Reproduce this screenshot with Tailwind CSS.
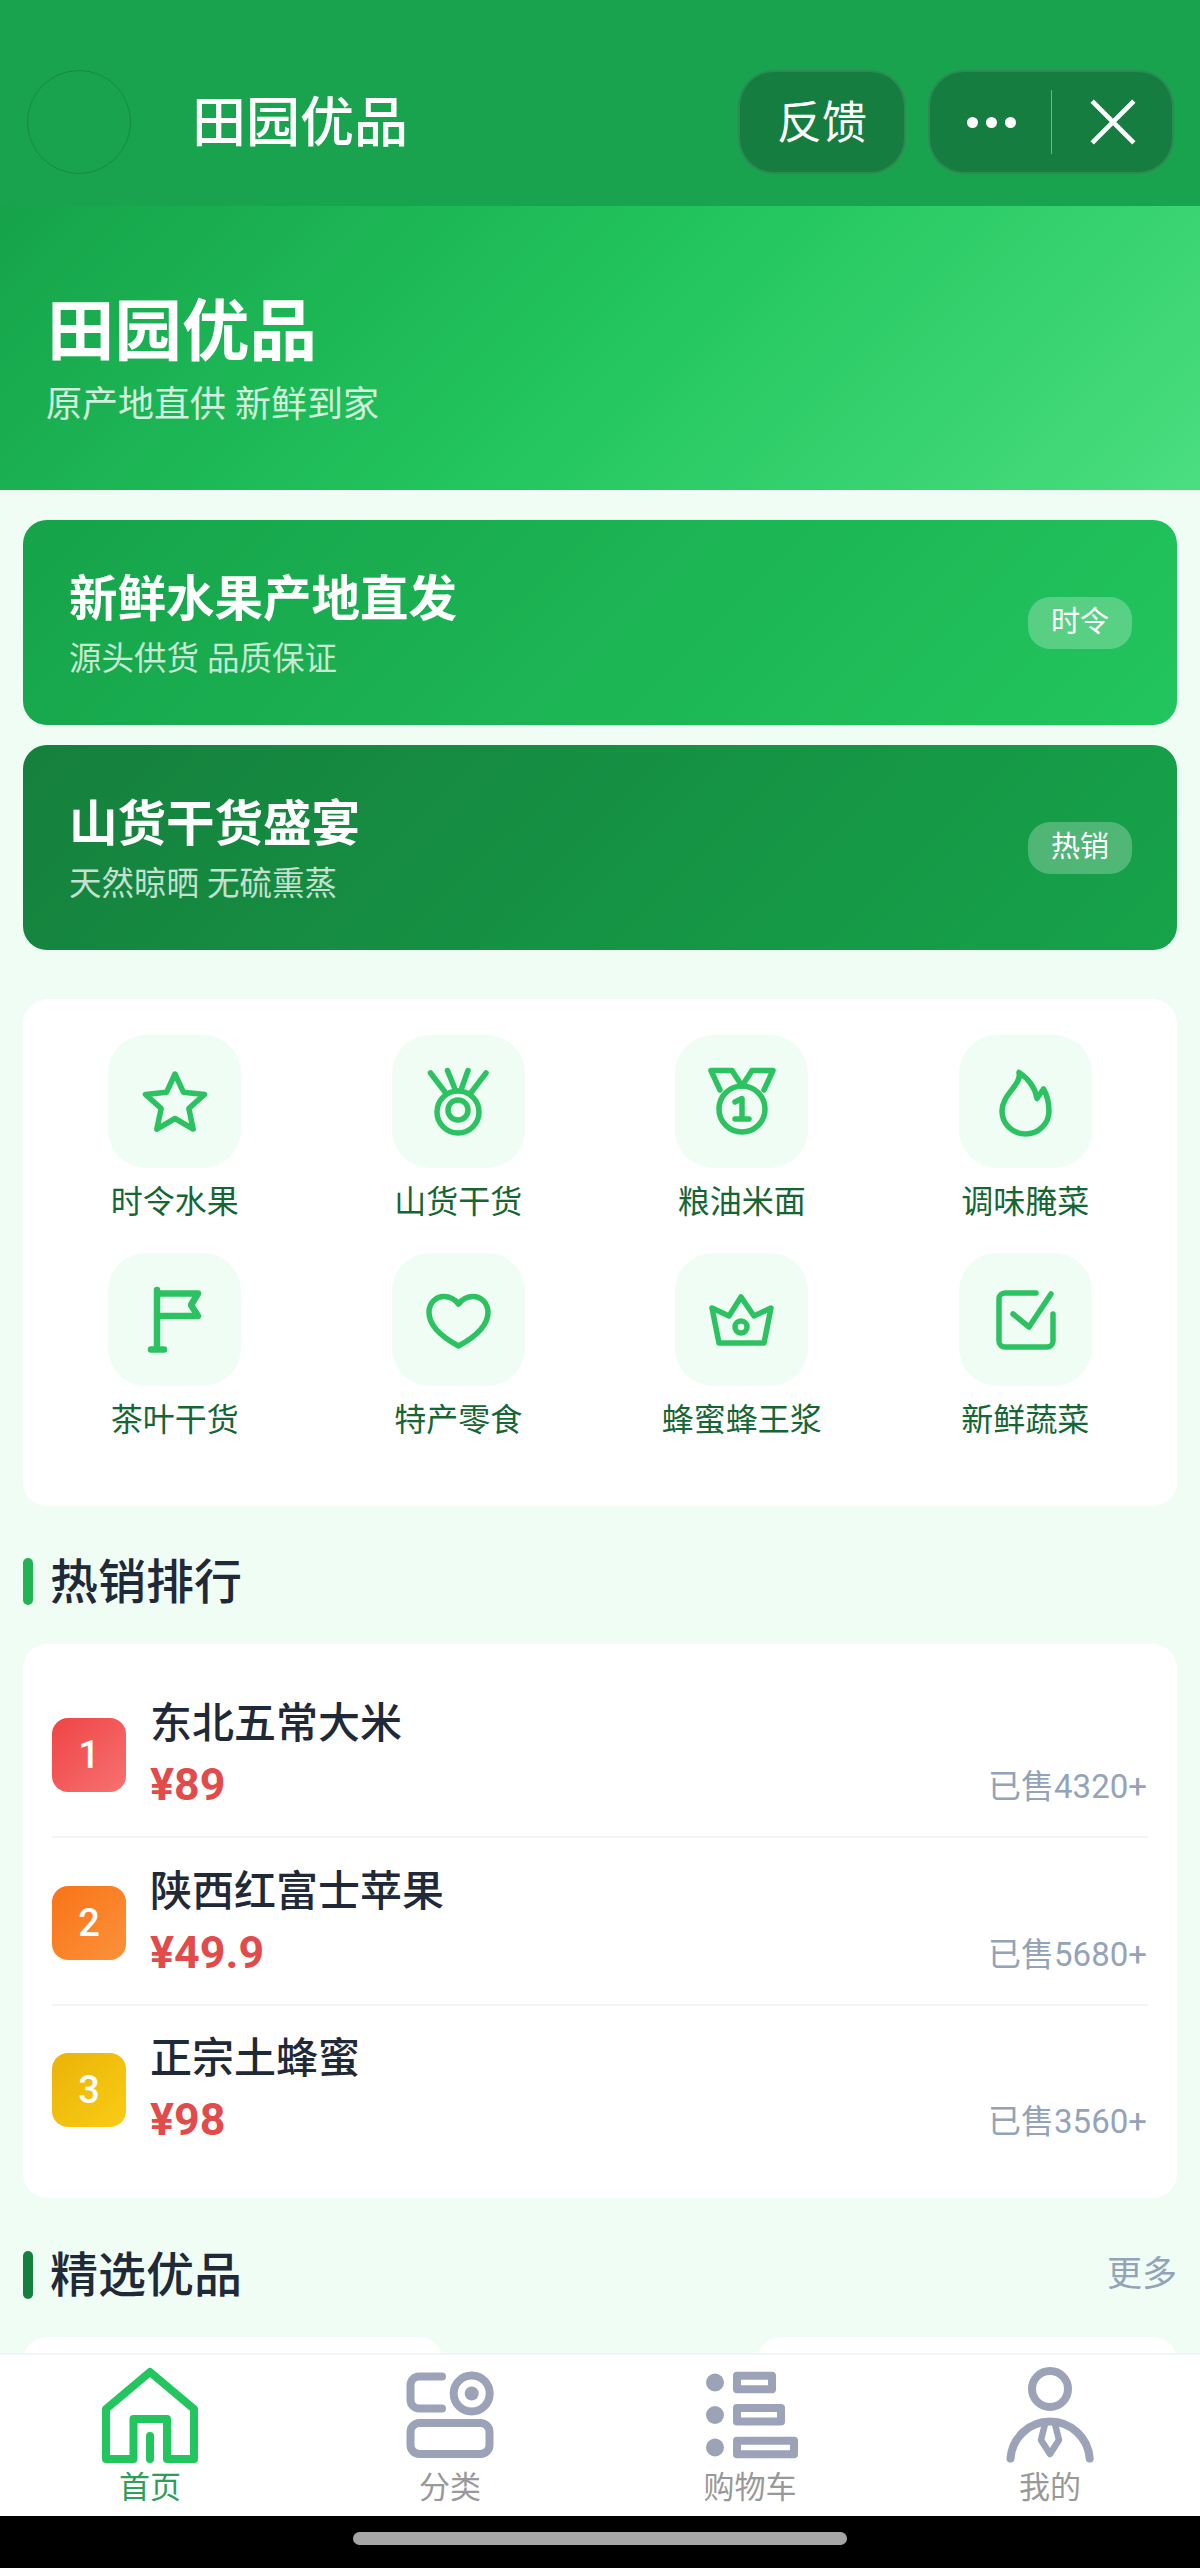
<!DOCTYPE html>
<html lang="zh-CN">

<head>
    <meta charset="UTF-8">
    <meta name="viewport" content="width=device-width, initial-scale=1.0">
    <title>田园优品</title>
    <script src="https://cdn.jsdelivr.net/npm/@tailwindcss/browser@4"></script>
</head>

<body class="bg-[#effdf4] font-['Roboto','Noto_Sans_CJK_SC',sans-serif]">
    <div class="flex h-[2568px] w-[1200px] flex-col overflow-hidden">

        <!-- nav bar -->
        <header class="flex h-[206px] shrink-0 items-start bg-[#19a34e] pt-[70px] text-white">
            <div class="ml-[27px] size-[104px] rounded-full border border-[#15803d]/70"></div>
            <div class="ml-[61px] h-[104px] pt-[2px] text-[54px] leading-[104px] font-medium">田园优品</div>
            <div class="ml-auto flex h-[104px] w-[168px] items-center justify-center rounded-[36px] border-2 border-white/10 bg-[#157d3f] pt-[4px] text-[45px]">反馈</div>
            <div class="mr-[26px] ml-[22px] flex h-[104px] w-[246px] items-center rounded-[36px] border-2 border-white/10 bg-[#157d3f]">
                <div class="flex w-[121px] items-center justify-center gap-[8px] pl-[2px]">
                    <span class="size-[11px] rounded-full bg-white"></span>
                    <span class="size-[11px] rounded-full bg-white"></span>
                    <span class="size-[11px] rounded-full bg-white"></span>
                </div>
                <div class="h-[64px] w-px bg-white/40"></div>
                <div class="flex flex-1 items-center justify-center pl-[2px]">
                    <svg class="size-[50px]" viewBox="0 0 48 48" fill="none" stroke="white" stroke-width="4.5"><path d="M4 4 44 44M44 4 4 44" /></svg>
                </div>
            </div>
        </header>

        <!-- hero -->
        <section class="h-[284px] shrink-0 bg-[linear-gradient(135deg,#16a34a,#22c55e_50%,#4ade80)] pt-[86px] pl-[47px] text-white">
            <h1 class="text-[67.5px] leading-[80px] font-bold">田园优品</h1>
            <p class="mt-[11px] -ml-[1px] text-[36px] leading-[44px] text-white/80">原产地直供 新鲜到家</p>
        </section>

        <main class="min-h-0 flex-1 overflow-hidden px-[23px] pt-[30px]">

            <!-- banners -->
            <div class="flex flex-col gap-[20px]">
                <div class="flex h-[205px] items-center justify-between rounded-[24px] bg-[linear-gradient(135deg,#16a34a,#22c55e)] pr-[45px] pl-[46px] text-white">
                    <div class="pt-[6px]">
                        <div class="text-[48.5px] leading-[60px] font-bold">新鲜水果产地直发</div>
                        <div class="mt-[7px] text-[32.5px] leading-[44px] text-white/75">源头供货 品质保证</div>
                    </div>
                    <span class="flex h-[52px] w-[104px] items-center justify-center rounded-[22px] bg-white/25 text-[29px]">时令</span>
                </div>
                <div class="flex h-[205px] items-center justify-between rounded-[24px] bg-[linear-gradient(135deg,#15803d,#16a34a)] pr-[45px] pl-[46px] text-white">
                    <div class="pt-[6px]">
                        <div class="text-[48.5px] leading-[60px] font-bold">山货干货盛宴</div>
                        <div class="mt-[7px] text-[32.5px] leading-[44px] text-white/75">天然晾晒 无硫熏蒸</div>
                    </div>
                    <span class="flex h-[52px] w-[104px] items-center justify-center rounded-[22px] bg-white/25 text-[29px]">热销</span>
                </div>
            </div>

            <!-- categories -->
            <div class="mt-[49px] grid h-[507px] grid-cols-4 content-start gap-y-[29px] rounded-[24px] bg-white px-[10px] pt-[36px] text-[32px] leading-[44px] text-[#166534]">
                <div class="flex flex-col items-center gap-[12px]">
                    <div class="size-[133px] rounded-[38px] bg-[#effdf4]">
                        <svg class="size-[133px]" viewBox="0 0 133 133" fill="none" stroke="#2cc261" stroke-width="5.5" stroke-linejoin="round" stroke-linecap="round"><path d="M67 39 75.5 57.3 96.5 59.4 80.8 73.5 85.2 94.1 67 83.5 48.8 94.1 53.2 73.5 37.5 59.4 58.5 57.3Z" /></svg>
                    </div>
                    <span>时令水果</span>
                </div>
                <div class="flex flex-col items-center gap-[12px]">
                    <div class="size-[133px] rounded-[38px] bg-[#effdf4]">
                        <svg class="size-[133px]" viewBox="0 0 133 133" fill="none" stroke="#2cc261" stroke-width="5.5" stroke-linecap="round"><circle cx="66" cy="77" r="21" /><circle cx="66" cy="75" r="10" /><path d="M38.5 38 53 57M55.5 35.5 63.4 55M76 35.5 69 55M94 38 79.5 57" /></svg>
                    </div>
                    <span>山货干货</span>
                </div>
                <div class="flex flex-col items-center gap-[12px]">
                    <div class="size-[133px] rounded-[38px] bg-[#effdf4]">
                        <svg class="size-[133px]" viewBox="0 0 133 133" fill="none" stroke="#2cc261" stroke-width="5.5" stroke-linejoin="round" stroke-linecap="round"><circle cx="67" cy="74" r="23" /><path d="M45 55 36 35.5H57L67 51 77 35.5H98L89 55" /><path d="M60 67 67 63.5V84M60 84H74" /></svg>
                    </div>
                    <span>粮油米面</span>
                </div>
                <div class="flex flex-col items-center gap-[12px]">
                    <div class="size-[133px] rounded-[38px] bg-[#effdf4]">
                        <svg class="size-[133px]" viewBox="0 0 133 133" fill="none" stroke="#2cc261" stroke-width="5.5" stroke-linejoin="round"><path d="M60 37.5C63 50 43 59 43 76A23.5 23 0 0 0 90 76C90 67 88 60 84.5 54L78 63.5C76 52 70 44 60 37.5Z" /></svg>
                    </div>
                    <span>调味腌菜</span>
                </div>
                <div class="flex flex-col items-center gap-[12px]">
                    <div class="size-[133px] rounded-[38px] bg-[#effdf4]">
                        <svg class="size-[133px]" viewBox="0 0 133 133" fill="none" stroke="#2cc261" stroke-width="6.5" stroke-linejoin="round" stroke-linecap="round"><path d="M49 37V96M43 96.5H56M49 40.5H90L83 52 90 63H49" /></svg>
                    </div>
                    <span>茶叶干货</span>
                </div>
                <div class="flex flex-col items-center gap-[12px]">
                    <div class="size-[133px] rounded-[38px] bg-[#effdf4]">
                        <svg class="size-[133px]" viewBox="0 0 133 133" fill="none" stroke="#2cc261" stroke-width="5.5" stroke-linejoin="round"><path d="M66.5 93C50 84 37 73 37 59.5 37 50 44 43.5 52 43.5 58 43.5 63 46.5 66.5 51 70 46.5 75 43.5 81 43.5 89 43.5 96 50 96 59.5 96 73 83 84 66.5 93Z" /></svg>
                    </div>
                    <span>特产零食</span>
                </div>
                <div class="flex flex-col items-center gap-[12px]">
                    <div class="size-[133px] rounded-[38px] bg-[#effdf4]">
                        <svg class="size-[133px]" viewBox="0 0 133 133" fill="none" stroke="#2cc261" stroke-width="5.5" stroke-linejoin="round"><path d="M66 44 79 63 96 55 89 90H44L37 55 54 63Z" /><circle cx="66" cy="74" r="6" /></svg>
                    </div>
                    <span>蜂蜜蜂王浆</span>
                </div>
                <div class="flex flex-col items-center gap-[12px]">
                    <div class="size-[133px] rounded-[38px] bg-[#effdf4]">
                        <svg class="size-[133px]" viewBox="0 0 133 133" fill="none" stroke="#2cc261" stroke-width="5.5" stroke-linejoin="round" stroke-linecap="round"><path d="M77 40H46A6 6 0 0 0 40 46V88A6 6 0 0 0 46 94H88A6 6 0 0 0 94 88V61" /><path d="M54 61 70 74 92 41" /></svg>
                    </div>
                    <span>新鲜蔬菜</span>
                </div>
            </div>

            <!-- hot ranking -->
            <div class="mt-[52px] flex h-[47px] items-center gap-[17px]">
                <span class="h-[47px] w-[10px] rounded-full bg-[#22b355]"></span>
                <h2 class="pt-[2px] text-[48px] leading-[47px] font-medium text-[#1f2937]">热销排行</h2>
            </div>
            <div class="mt-[39px] h-[554px] rounded-[24px] bg-white px-[29px] pt-[26px]">
                <div class="flex h-[168px] items-center gap-[24px] border-b-2 border-[#f1f5f9] pt-[4px]">
                    <div class="flex size-[74px] shrink-0 items-center justify-center rounded-[16px] bg-[linear-gradient(135deg,#ef4444,#f87171)] text-[38px] font-medium text-white">1</div>
                    <div class="flex-1 pt-[2px]">
                        <div class="text-[42px] leading-[56px] font-medium text-[#1f2937]">东北五常大米</div>
                        <div class="mt-[2px] flex items-center justify-between">
                            <span class="text-[44.8px] leading-[62px] font-bold text-[#e14b4b]">¥89</span>
                            <span class="mt-[4px] pr-[1px] text-[33px] text-[#94a3b8]">已售4320+</span>
                        </div>
                    </div>
                </div>
                <div class="flex h-[168px] items-center gap-[24px] border-b-2 border-[#f1f5f9] pt-[4px]">
                    <div class="flex size-[74px] shrink-0 items-center justify-center rounded-[16px] bg-[linear-gradient(135deg,#f97316,#fb923c)] text-[38px] font-medium text-white">2</div>
                    <div class="flex-1 pt-[2px]">
                        <div class="text-[42px] leading-[56px] font-medium text-[#1f2937]">陕西红富士苹果</div>
                        <div class="mt-[2px] flex items-center justify-between">
                            <span class="text-[44.8px] leading-[62px] font-bold text-[#e14b4b]">¥49.9</span>
                            <span class="mt-[4px] pr-[1px] text-[33px] text-[#94a3b8]">已售5680+</span>
                        </div>
                    </div>
                </div>
                <div class="flex h-[166px] items-center gap-[24px] pt-[2px]">
                    <div class="flex size-[74px] shrink-0 items-center justify-center rounded-[16px] bg-[linear-gradient(135deg,#eab308,#facc15)] text-[38px] font-medium text-white">3</div>
                    <div class="flex-1 pt-[2px]">
                        <div class="text-[42px] leading-[56px] font-medium text-[#1f2937]">正宗土蜂蜜</div>
                        <div class="mt-[2px] flex items-center justify-between">
                            <span class="text-[44.8px] leading-[62px] font-bold text-[#e14b4b]">¥98</span>
                            <span class="mt-[4px] pr-[1px] text-[33px] text-[#94a3b8]">已售3560+</span>
                        </div>
                    </div>
                </div>
            </div>

            <!-- picks -->
            <div class="mt-[53px] flex h-[48px] items-center">
                <span class="h-[48px] w-[10px] rounded-full bg-[#15803d]"></span>
                <h2 class="ml-[17px] pt-[2px] text-[48px] leading-[48px] font-medium text-[#1f2937]">精选优品</h2>
                <span class="ml-auto text-[35px] text-[#94a3b8]">更多</span>
            </div>
            <div class="mt-[38px] flex justify-between">
                <div class="h-[400px] w-[420px] rounded-[24px] bg-white"></div>
                <div class="h-[400px] w-[420px] rounded-[24px] bg-white"></div>
            </div>
        </main>

        <!-- tab bar -->
        <nav class="grid h-[163px] shrink-0 grid-cols-4 border-t-2 border-[#f3f4f6] bg-white pt-[12px] text-[31px] leading-[40px] text-[#999999]">
            <div class="flex flex-col items-center text-[#2f9e58]">
                <svg class="size-[96px]" viewBox="0 0 96 96" fill="none" stroke="#22c55e" stroke-width="8" stroke-linejoin="round" stroke-linecap="round"><path d="M4 92V42L48 5 92 42V92H65V52H31.5V92Z" /><path d="M48 69V92" /></svg>
                <span class="mt-[5px]">首页</span>
            </div>
            <div class="flex flex-col items-center">
                <svg class="size-[96px]" viewBox="0 0 96 96" fill="none" stroke="#9ca3b8" stroke-width="8" stroke-linecap="round"><path d="M40 9.5H17A8.5 8.5 0 0 0 8.5 18V33A8.5 8.5 0 0 0 17 41.5H40" /><circle cx="69.7" cy="26.5" r="18" /><circle cx="69.7" cy="26.5" r="7" fill="#9ca3b8" stroke="none" /><rect x="8.5" y="56" width="79" height="31" rx="9" /></svg>
                <span class="mt-[5px]">分类</span>
            </div>
            <div class="flex flex-col items-center">
                <svg class="size-[96px]" viewBox="0 0 96 96" fill="#9ca3b8"><circle cx="13" cy="15.5" r="9" /><circle cx="13" cy="48" r="9" /><circle cx="13" cy="80.5" r="9" /><g fill="none" stroke="#9ca3b8" stroke-width="8" stroke-linejoin="round"><rect x="35" y="8.7" width="35" height="13.6" /><rect x="35" y="41" width="44" height="13.6" /><rect x="35" y="73.7" width="57" height="13.6" /></g></svg>
                <span class="mt-[5px]">购物车</span>
            </div>
            <div class="flex flex-col items-center">
                <svg class="size-[96px]" viewBox="0 0 96 96" fill="none" stroke="#9ca3b8" stroke-width="8" stroke-linecap="round" stroke-linejoin="round"><circle cx="48" cy="22" r="18" /><path d="M8.5 91.5A39.7 39.7 0 0 1 87.7 91.5" /><path d="M43.5 55 39 73 48 87 57 73 52.5 55" stroke-width="6.5" /></svg>
                <span class="mt-[5px]">我的</span>
            </div>
        </nav>

        <!-- system bar -->
        <div class="flex h-[52px] shrink-0 justify-center bg-black pt-[16px]">
            <div class="h-[13px] w-[494px] rounded-full bg-[#a6a6a6]"></div>
        </div>
    </div>
</body>

</html>
